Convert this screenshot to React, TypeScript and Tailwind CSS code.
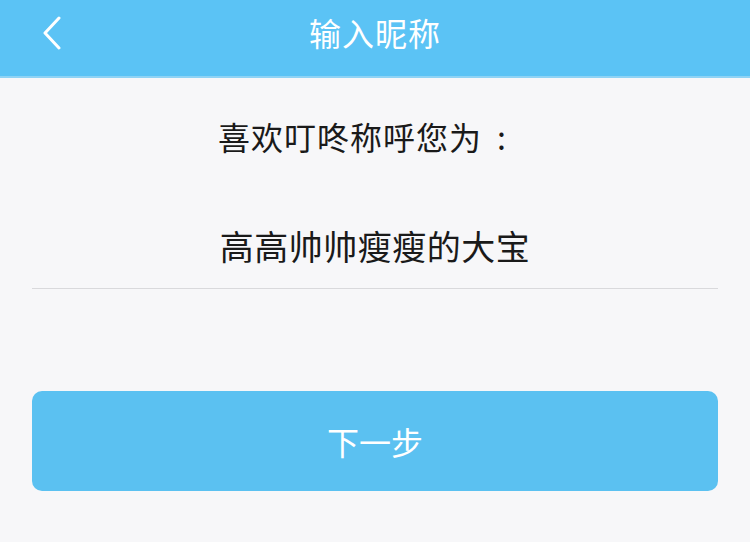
import React from "react";

const font = { fontFamily: '"Noto Sans CJK SC", "Noto Sans", sans-serif' };

export default function App() {
  return (
    <div lang="zh-CN" className="w-[750px] h-[542px] bg-[#f7f7f9] flex flex-col" style={font}>
      {/* Header */}
      <div className="relative h-[78px] bg-[#5bc3f5] border-b-2 border-[#8fd3f5] flex items-center justify-center">
        <button className="absolute left-[40px] top-[16px] w-[24px] h-[34px] flex items-center">
          <svg width="22" height="34" viewBox="0 0 22 34" fill="none">
            <path d="M19 2 L5 17 L19 32" stroke="white" strokeWidth="3" strokeLinecap="round" strokeLinejoin="round" />
          </svg>
        </button>
        <h1 className="text-white text-[32px] leading-none font-normal tracking-[1px] -mt-[12px]">输入昵称</h1>
      </div>

      {/* Content */}
      <div className="flex flex-col items-center">
        <p className="mt-[42px] text-[32px] leading-none text-[#1a1a1a] pr-[10px] tracking-[1px]">
          喜欢叮咚称呼您为<span className="inline-block w-[40px] text-center">:</span>
        </p>
        <div className="mt-[77px] w-[686px] border-b border-[#d9d9dc] pb-[25px] flex justify-center">
          <span className="text-[34px] leading-none text-[#1a1a1a] tracking-[0.5px]">高高帅帅瘦瘦的大宝</span>
        </div>
        <button className="mt-[102px] w-[686px] h-[100px] rounded-[10px] bg-[#5bc1f1] text-white text-[32px] leading-none flex items-center justify-center">
          下一步
        </button>
      </div>
    </div>
  );
}
